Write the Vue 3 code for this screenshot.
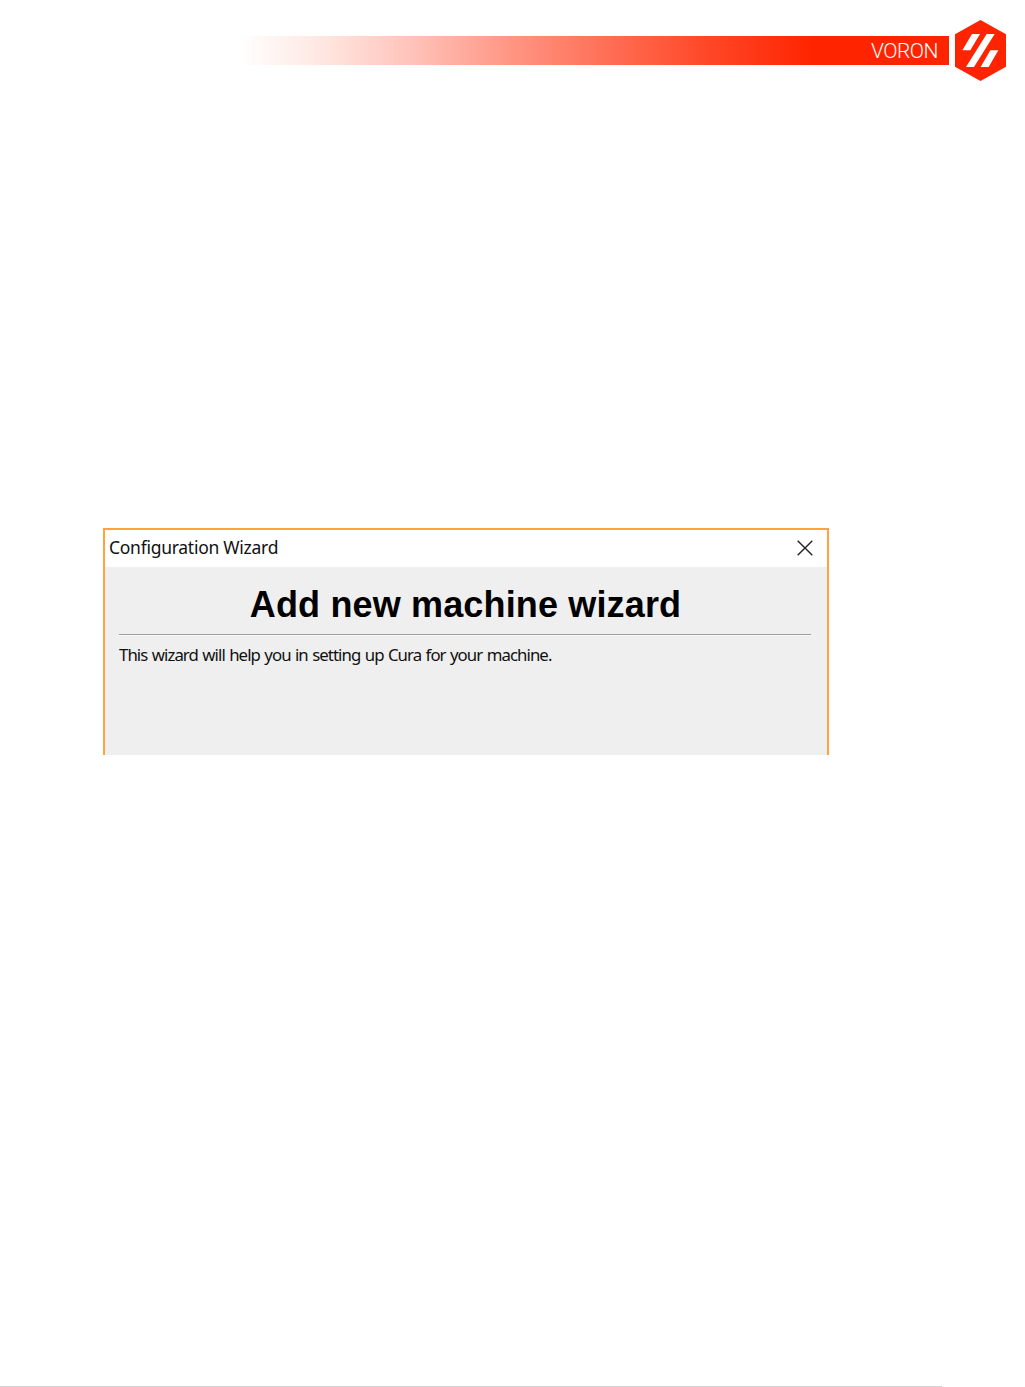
<template>
  <div class="page">
    <header class="page-header">
      <div class="brand-bar">
        <span class="brand-name">{{ brand }}</span>
      </div>
      <svg class="brand-logo" viewBox="0 0 153 183" aria-hidden="true">
        <path class="hexagon" d="M76.500 0L153 43V140L76.500 183L0 140V43Z" />
        <path class="stripe" d="M51 42H75L46 91H22ZM95 42H119L57 141H33ZM106 91H130L101 141H77Z" />
      </svg>
    </header>

    <main class="page-content">
      <section class="wizard">
        <div class="title-bar">
          <span class="window-title">{{ windowTitle }}</span>
          <button class="close-button" aria-label="Close">
            <svg viewBox="0 0 16 16">
              <path d="M0.700 0.700L15.300 15.300M15.300 0.700L0.700 15.300" />
            </svg>
          </button>
        </div>
        <div class="wizard-body">
          <h1 class="wizard-heading"><span>{{ heading }}</span></h1>
          <p class="wizard-text">{{ description }}</p>
        </div>
      </section>
    </main>

    <footer class="page-footer"></footer>
  </div>
</template>

<script setup>
const brand = 'VORON'
const windowTitle = 'Configuration Wizard'
const heading = 'Add new machine wizard'
const description = 'This wizard will help you in setting up Cura for your machine.'
</script>

<style>
body {
  margin: 0;
  background: #fff;
}
</style>

<style scoped>
.page {
  box-sizing: border-box;
  display: flex;
  flex-direction: column;
  width: 1025px;
  height: 1387px;
  padding-top: 20px;
  background: #fff;
}

.page-header {
  display: flex;
  align-items: flex-start;
  gap: 6px;
  height: 61px;
  padding-left: 232px;
}

.brand-bar {
  box-sizing: border-box;
  display: flex;
  align-items: center;
  justify-content: flex-end;
  width: 717px;
  height: 29px;
  margin-top: 16.4px;
  padding: 2px 11px 0 0;
  background: linear-gradient(
    to right,
    #fff 1%,
    #ffe6e0 13%,
    #ffc3ba 25%,
    #ff9583 39%,
    #ff6a50 54%,
    #ff4828 66%,
    #ff2400 81%
  );
}

.brand-name {
  font-family: Roboto, "Liberation Sans", sans-serif;
  font-size: 21px;
  font-weight: 300;
  line-height: 27px;
  letter-spacing: -0.5px;
  color: #fff;
}

.brand-logo {
  width: 51px;
  height: 61px;
}

.hexagon {
  fill: #ff2400;
}

.stripe {
  fill: #fff;
}

.page-content {
  flex: 1;
  padding: 447px 0 0 103px;
}

.wizard {
  box-sizing: border-box;
  width: 726px;
  height: 227px;
  border: 2px solid #ffa33c;
  border-bottom: none;
  background: #efefef;
}

.title-bar {
  display: flex;
  align-items: center;
  justify-content: space-between;
  height: 37px;
  padding: 0 14px 0 4px;
  background: #fff;
}

.window-title {
  font-family: "Noto Sans", sans-serif;
  font-size: 17.5px;
  line-height: 35px;
  padding-bottom: 2px;
  letter-spacing: -0.27px;
  color: #111;
}

.close-button {
  display: flex;
  padding: 0 0 2px;
  border: none;
  background: none;
}

.close-button svg {
  width: 16px;
  height: 16px;
  fill: none;
  stroke: #222;
  stroke-width: 1.4;
}

.wizard-body {
  padding: 0 16px 0 14px;
}

.wizard-heading {
  height: 67px;
  margin: 0;
  padding-left: 1px;
  border-bottom: 1px solid #9c9c9c;
  box-shadow: 0 1px #fafafa;
  font-family: "Liberation Sans", Arial, sans-serif;
  font-size: 36px;
  font-weight: 700;
  line-height: 75px;
  letter-spacing: 0.15px;
  text-align: center;
  color: #000;
}

.wizard-text {
  margin: 0;
  font-family: "Noto Sans", sans-serif;
  font-size: 16.8px;
  line-height: 40px;
  letter-spacing: -0.92px;
  word-spacing: 0.9px;
  white-space: nowrap;
  color: #111;
}

.page-footer {
  width: 942px;
  height: 1px;
  background: #d4d4d4;
}
</style>
